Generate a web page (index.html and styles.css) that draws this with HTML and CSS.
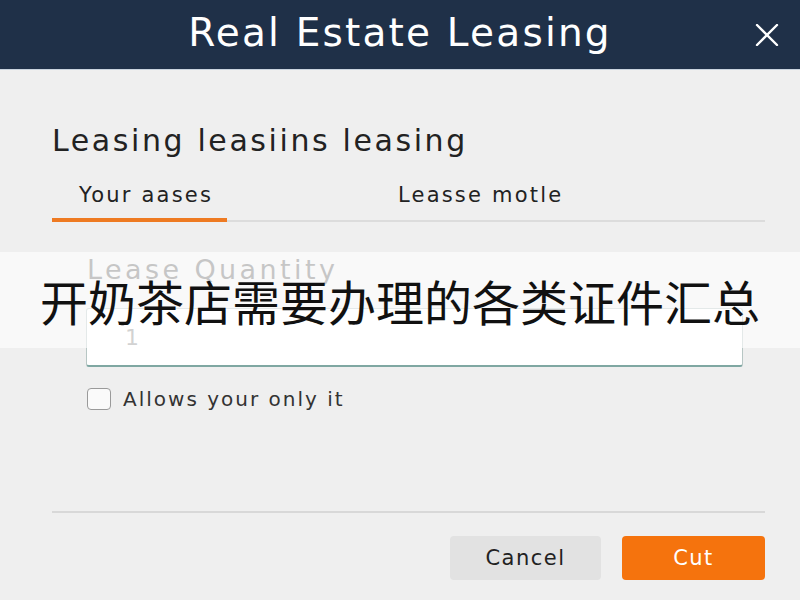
FILE: index.html
```html
<!DOCTYPE html>
<html>
  <head>
    <title>Real Estate Leasing</title>
    <link rel="stylesheet" href="styles.css">
  </head>
  <body>
    <div class="topbar">
      <span></span>
      <h1 class="topbar-title">Real Estate Leasing</h1>
      <button class="close-btn" aria-label="Close">
        <svg width="30" height="22" viewBox="0 0 30 22">
          <path d="M5 1 L25 21 M25 1 L5 21" stroke="#fff" stroke-width="2.4" stroke-linecap="round" fill="none"/>
        </svg>
      </button>
    </div>

    <div class="content">
      <h2 class="section-title">Leasing leasiins leasing</h2>

      <div class="tabs">
        <div class="tab active">Your aases</div>
        <div class="tab">Leasse motle</div>
      </div>

      <div class="form">
        <label class="field-label" for="qty">Lease Quantity</label>
        <input id="qty" class="field-input" type="text" value="1">

        <label class="check-row">
          <span class="check-box"></span>
          <span>Allows your only it</span>
        </label>
      </div>

      <div class="footer">
        <button class="btn btn-cancel">Cancel</button>
        <button class="btn btn-cut">Cut</button>
      </div>
    </div>

    <div class="banner">开奶茶店需要办理的各类证件汇总</div>
  </body>
</html>
```

FILE: styles.css
```css
body {
  margin: 0;
  padding: 0;
  background: #efefef;
  font-family: "DejaVu Sans", "Open Sans", sans-serif;
  color: #2a2a2a;
  width: 800px;
  height: 600px;
  overflow: hidden;
}

.topbar {
  height: 69px;
  background: #1f3048;
  border-bottom: 1px solid #c9d3de;
  display: grid;
  grid-template-columns: 1fr auto 1fr;
  align-items: center;
}
.topbar-title {
  margin: 0;
  color: #ffffff;
  font-size: 39px;
  font-weight: 400;
  letter-spacing: 2.2px;
  position: relative;
  top: -2px;
}
.close-btn {
  justify-self: end;
  margin-right: 18px;
  background: none;
  border: 0;
  padding: 0;
  display: flex;
}

.content {
  padding: 0 35px 0 52px;
}

.section-title {
  margin: 51px 0 0;
  font-size: 30px;
  font-weight: 400;
  line-height: 40px;
  letter-spacing: 2.6px;
  color: #222;
}

.tabs {
  margin-top: 19px;
  display: flex;
  border-bottom: 2px solid #dcdcdc;
}
.tab {
  font-size: 21px;
  line-height: 30px;
  letter-spacing: 2.2px;
  padding: 0 0 10px;
  color: #222;
}
.tab.active {
  width: 175px;
  padding-left: 27px;
  box-sizing: border-box;
  border-bottom: 4px solid #ee7a22;
  margin-bottom: -2px;
  padding-bottom: 8px;
}
.tab + .tab {
  margin-left: 171px;
}

.form {
  padding-left: 35px;
  padding-right: 22px;
}
.field-label {
  display: block;
  margin-top: 30px;
  font-size: 27px;
  line-height: 36px;
  letter-spacing: 3.4px;
  color: #6a6a6a;
}
.field-input {
  display: block;
  box-sizing: border-box;
  width: 657px;
  height: 59px;
  margin: 20px 0 0 -1px;
  border: 1px solid #b7c6c4;
  border-bottom: 2px solid #7fa7a2;
  border-radius: 3px;
  background: #fff;
  padding: 0 38px;
  font-family: inherit;
  font-size: 22px;
  color: #8a8a8a;
}

.check-row {
  display: flex;
  align-items: center;
  gap: 12px;
  margin-top: 20px;
  font-size: 20px;
  letter-spacing: 2px;
  color: #333;
}
.check-box {
  width: 22px;
  height: 20px;
  border: 1.5px solid #9a9a9a;
  border-radius: 4px;
  background: #fafafa;
}

.footer {
  margin-top: 100px;
  border-top: 2px solid #d8d8d8;
  padding-top: 23px;
  display: flex;
  justify-content: flex-end;
  gap: 21px;
}
.btn {
  height: 44px;
  border: 0;
  border-radius: 4px;
  font-family: inherit;
  font-size: 21px;
  letter-spacing: 1.5px;
}
.btn-cancel {
  width: 151px;
  background: #e2e2e2;
  color: #222;
}
.btn-cut {
  width: 143px;
  background: #f5730d;
  color: #fff;
}

/* caption strip laid over the form */
.banner {
  position: absolute;
  left: 0;
  right: 0;
  top: 252px;
  height: 96px;
  background: rgba(255, 255, 255, 0.62);
  display: flex;
  align-items: center;
  justify-content: center;
  font-family: "Noto Sans CJK SC", sans-serif;
  font-size: 48px;
  letter-spacing: 0;
  color: #111;
}
```
